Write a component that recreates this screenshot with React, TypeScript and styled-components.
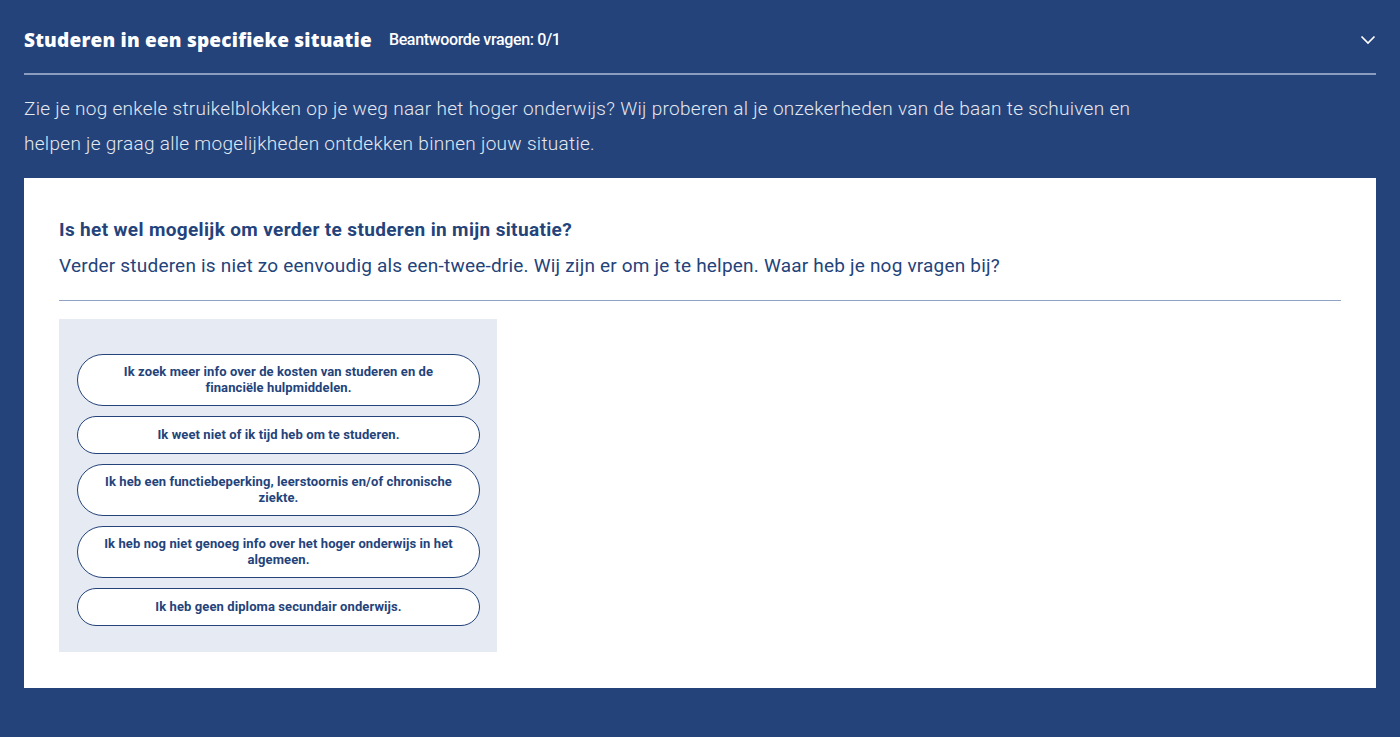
import styled, { createGlobalStyle } from 'styled-components';

const navy = '#24437a';

const GlobalStyle = createGlobalStyle`
    html, body {
        margin: 0;
        padding: 0;
        background: ${navy};
    }
    body {
        font-family: Roboto, 'Noto Sans', sans-serif;
    }
`;

const Section = styled.section`
    padding: 0 24px 50px;
    min-height: 737px;
    box-sizing: border-box;
    color: #fff;
`;

const Header = styled.header`
    display: flex;
    align-items: center;
    height: 75px;
    border-bottom: 2px solid #8a9cc0;
    box-sizing: border-box;
    padding-top: 6px;
`;

const Title = styled.h2`
    margin: 0;
    font-family: 'Open Sans', sans-serif;
    font-weight: 800;
    font-size: 19px;
    letter-spacing: 0.2px;
`;

const Counter = styled.span`
    margin-left: 17px;
    font-size: 16px;
    font-weight: 500;
    letter-spacing: -0.35px;
`;

const Toggle = styled.button`
    margin-left: auto;
    margin-right: -4px;
    width: 24px;
    height: 24px;
    padding: 0;
    border: none;
    background: transparent;
    display: flex;
    align-items: center;
    justify-content: center;
    cursor: pointer;
`;

const Intro = styled.p`
    margin: 16px 0 0;
    max-width: 1125px;
    font-size: 19px;
    font-weight: 300;
    letter-spacing: 0.3px;
    line-height: 35px;
    color: #e3e8f1;
`;

const Card = styled.div`
    margin-top: 17px;
    background: #fff;
    padding: 40px 35px 36px;
    color: ${navy};
`;

const Question = styled.h3`
    margin: 0;
    font-size: 19px;
    font-weight: 700;
    letter-spacing: 0.35px;
    line-height: 24px;
`;

const Lead = styled.p`
    margin: 12px 0 0;
    font-size: 19px;
    letter-spacing: 0.2px;
    line-height: 24px;
`;

const Rule = styled.hr`
    margin: 22px 0 18px;
    border: none;
    border-top: 1px solid #8fa3c4;
`;

const Choices = styled.div`
    width: 438px;
    box-sizing: border-box;
    background: #e6eaf2;
    padding: 35px 17px 26px 18px;
    display: flex;
    flex-direction: column;
    gap: 10px;
`;

const Choice = styled.button`
    display: block;
    width: 100%;
    min-height: 38px;
    box-sizing: border-box;
    padding: 9px 26px;
    background: #fff;
    border: 1px solid ${navy};
    border-radius: 27px;
    color: ${navy};
    font-family: Roboto, sans-serif;
    font-weight: 700;
    font-size: 13px;
    letter-spacing: 0.1px;
    line-height: 16px;
    text-align: center;
    cursor: pointer;
`;

const options = [
    'Ik zoek meer info over de kosten van studeren en de financiële hulpmiddelen.',
    'Ik weet niet of ik tijd heb om te studeren.',
    'Ik heb een functiebeperking, leerstoornis en/of chronische ziekte.',
    'Ik heb nog niet genoeg info over het hoger onderwijs in het algemeen.',
    'Ik heb geen diploma secundair onderwijs.',
];

const App = () => {
    return (
        <>
            <GlobalStyle />
            <Section>
                <Header>
                    <Title>Studeren in een specifieke situatie</Title>
                    <Counter>Beantwoorde vragen: 0/1</Counter>
                    <Toggle aria-label="Openen">
                        <svg width="16" height="10" viewBox="0 0 16 10" fill="none">
                            <path d="M1.5 1.5L8 8L14.5 1.5" stroke="#fff" strokeWidth="1.7" />
                        </svg>
                    </Toggle>
                </Header>
                <Intro>
                    Zie je nog enkele struikelblokken op je weg naar het hoger onderwijs? Wij proberen al je
                    onzekerheden van de baan te schuiven en helpen je graag alle mogelijkheden ontdekken binnen
                    jouw situatie.
                </Intro>
                <Card>
                    <Question>Is het wel mogelijk om verder te studeren in mijn situatie?</Question>
                    <Lead>
                        Verder studeren is niet zo eenvoudig als een-twee-drie. Wij zijn er om je te helpen. Waar
                        heb je nog vragen bij?
                    </Lead>
                    <Rule />
                    <Choices>
                        {options.map((o) => (
                            <Choice key={o}>{o}</Choice>
                        ))}
                    </Choices>
                </Card>
            </Section>
        </>
    );
};

export default App;
